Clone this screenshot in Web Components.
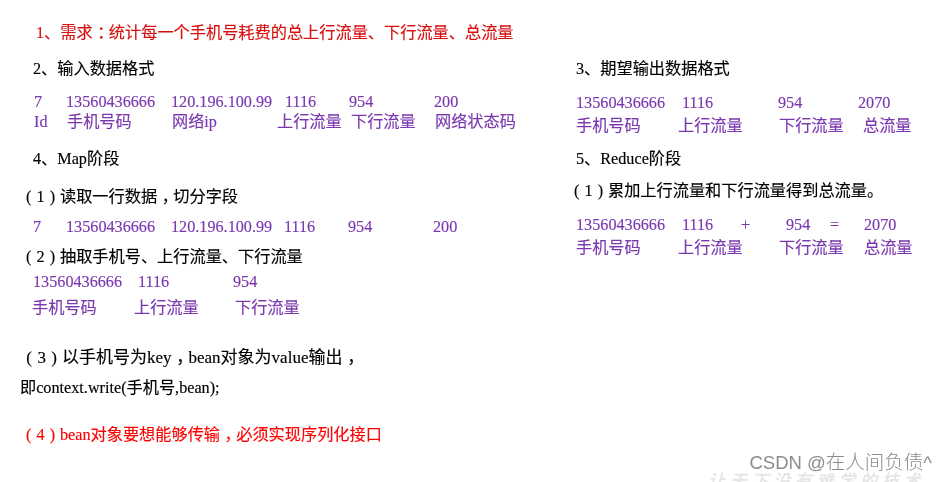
<!DOCTYPE html>
<html lang="zh-CN">
<head>
<meta charset="utf-8">
<title>Flow statistics</title>
<style>
html,body{margin:0;padding:0;background:#fff}
</style>
</head>
<body>
<x-slide>
  <x-column style="--w:560px">
    <x-line tone="alert" style="--gap:23px;--indent:36px">1、需求<x-c>：</x-c>统计每一个手机号耗费的总上行流量、下行流量、总流量</x-line>
    <x-line style="--gap:16px;--indent:33px">2、输入数据格式</x-line>
    <x-line tone="data" style="--gap:13px;--indent:34px;--cols:32px 105px 114px 64px 85px 1fr"><span>7</span><span>13560436666</span><span>120.196.100.99</span><span>1116</span><span>954</span><span>200</span></x-line>
    <x-line tone="data" style="--gap:0;--indent:34px;--cols:33px 105px 105px 74px 84px 1fr"><span>Id</span><span>手机号码</span><span>网络ip</span><span>上行流量</span><span>下行流量</span><span>网络状态码</span></x-line>
    <x-line style="--gap:17px;--indent:33px">4、Map阶段</x-line>
    <x-line style="--gap:18px;--indent:20px"><x-num>( 1 )</x-num>读取一行数据<x-c>，</x-c>切分字段</x-line>
    <x-line tone="data" style="--gap:10px;--indent:33px;--cols:33px 105px 113px 64px 85px 1fr"><span>7</span><span>13560436666</span><span>120.196.100.99</span><span>1116</span><span>954</span><span>200</span></x-line>
    <x-line style="--gap:10px;--indent:20px"><x-num>( 2 )</x-num>抽取手机号、上行流量、下行流量</x-line>
    <x-line tone="data" style="--gap:5px;--indent:33px;--cols:105px 95px 1fr"><span>13560436666</span><span>1116</span><span>954</span></x-line>
    <x-line tone="data" style="--gap:6px;--indent:32px;--cols:102px 101px 1fr"><span>手机号码</span><span>上行流量</span><span>下行流量</span></x-line>
    <x-line style="--gap:30px;--indent:20px;--size:17px"><x-num>( 3 )</x-num>以手机号为key<x-c>，</x-c>bean对象为value输出<x-c>，</x-c></x-line>
    <x-line style="--gap:10px;--indent:20px">即context.write(手机号,bean);</x-line>
    <x-line tone="bright" style="--gap:27px;--indent:20px"><x-num>( 4 )</x-num>bean对象要想能够传输<x-c>，</x-c>必须实现序列化接口</x-line>
  </x-column>
  <x-column style="--w:387px">
    <x-line style="--gap:59px;--indent:16px">3、期望输出数据格式</x-line>
    <x-line tone="data" style="--gap:14px;--indent:16px;--cols:106px 96px 80px 1fr"><span>13560436666</span><span>1116</span><span>954</span><span>2070</span></x-line>
    <x-line tone="data" style="--gap:3px;--indent:16px;--cols:102px 101px 84px 1fr"><span>手机号码</span><span>上行流量</span><span>下行流量</span><span>总流量</span></x-line>
    <x-line style="--gap:13px;--indent:16px">5、Reduce阶段</x-line>
    <x-line style="--gap:12px;--indent:8px"><x-num>( 1 )</x-num>累加上行流量和下行流量得到总流量。</x-line>
    <x-line tone="data" style="--gap:14px;--indent:16px;--cols:106px 59px 45px 44px 34px 1fr"><span>13560436666</span><span>1116</span><span>+</span><span>954</span><span>=</span><span>2070</span></x-line>
    <x-line tone="data" style="--gap:3px;--indent:16px;--cols:102px 101px 85px 1fr"><span>手机号码</span><span>上行流量</span><span>下行流量</span><span>总流量</span></x-line>
  </x-column>
  <x-watermark></x-watermark>
</x-slide>
<script>
function shadow(el, html){
  el.attachShadow({mode:'open'}).innerHTML = html;
}
customElements.define('x-slide', class extends HTMLElement{
  constructor(){super();shadow(this,`<style>
    :host{display:flex;position:relative;width:947px;height:482px;overflow:hidden;background:#fff;
      font:16.2px/20px "Liberation Serif","Noto Sans CJK SC",serif;color:#000;filter:blur(.3px);
      -webkit-text-stroke:.15px currentColor}
  </style><slot></slot>`);}
});
customElements.define('x-column', class extends HTMLElement{
  constructor(){super();shadow(this,`<style>:host{display:block;flex:none;width:var(--w)}</style><slot></slot>`);}
});
customElements.define('x-line', class extends HTMLElement{
  constructor(){super();shadow(this,`<style>
    :host{display:grid;grid-template-columns:var(--cols,1fr);height:20px;line-height:20px;white-space:nowrap;
      margin-top:var(--gap,0);padding-left:var(--indent,0);font-size:var(--size,inherit)}
    :host([tone=alert]){color:#d80f0f}
    :host([tone=bright]){color:#f00}
    :host([tone=data]){color:#7a38b0}
    .text{display:block}
  </style><div class="text"><slot></slot></div>`);}
  connectedCallback(){
    if(this.getAttribute('tone')==='data'){
      this.shadowRoot.querySelector('.text').style.display='contents';
    }
  }
});
customElements.define('x-num', class extends HTMLElement{
  constructor(){super();shadow(this,`<style>:host{display:inline-block;box-sizing:border-box;width:2.47em;padding-left:.37em;white-space:pre;word-spacing:.07em}</style><slot></slot>`);}
});
customElements.define('x-c', class extends HTMLElement{
  constructor(){super();shadow(this,`<style>:host{display:inline-block;box-sizing:border-box;width:1em;padding-left:.28em;letter-spacing:-.28em}</style><slot></slot>`);}
});
customElements.define('x-watermark', class extends HTMLElement{
  constructor(){super();shadow(this,`<style>
    :host{position:absolute;right:0;bottom:0;width:260px;height:42px;display:block;overflow:hidden;-webkit-text-stroke:0}
    .motto{position:absolute;left:21px;top:27px;font:italic 700 17px/26px "Noto Sans CJK SC",sans-serif;letter-spacing:4.7px;color:#e6e6e6;white-space:nowrap}
    .tag{position:absolute;right:15px;top:10px;font:300 18.5px/24px "Liberation Sans","Noto Sans CJK SC",sans-serif;color:#8c8c8c;white-space:nowrap}
    .tag b{font-weight:300;font-size:19.5px}
  </style><span class="motto">让天下没有难学的技术</span><span class="tag">CSDN @<b>在人间负债</b>^</span>`);}
});
</script>
</body>
</html>
